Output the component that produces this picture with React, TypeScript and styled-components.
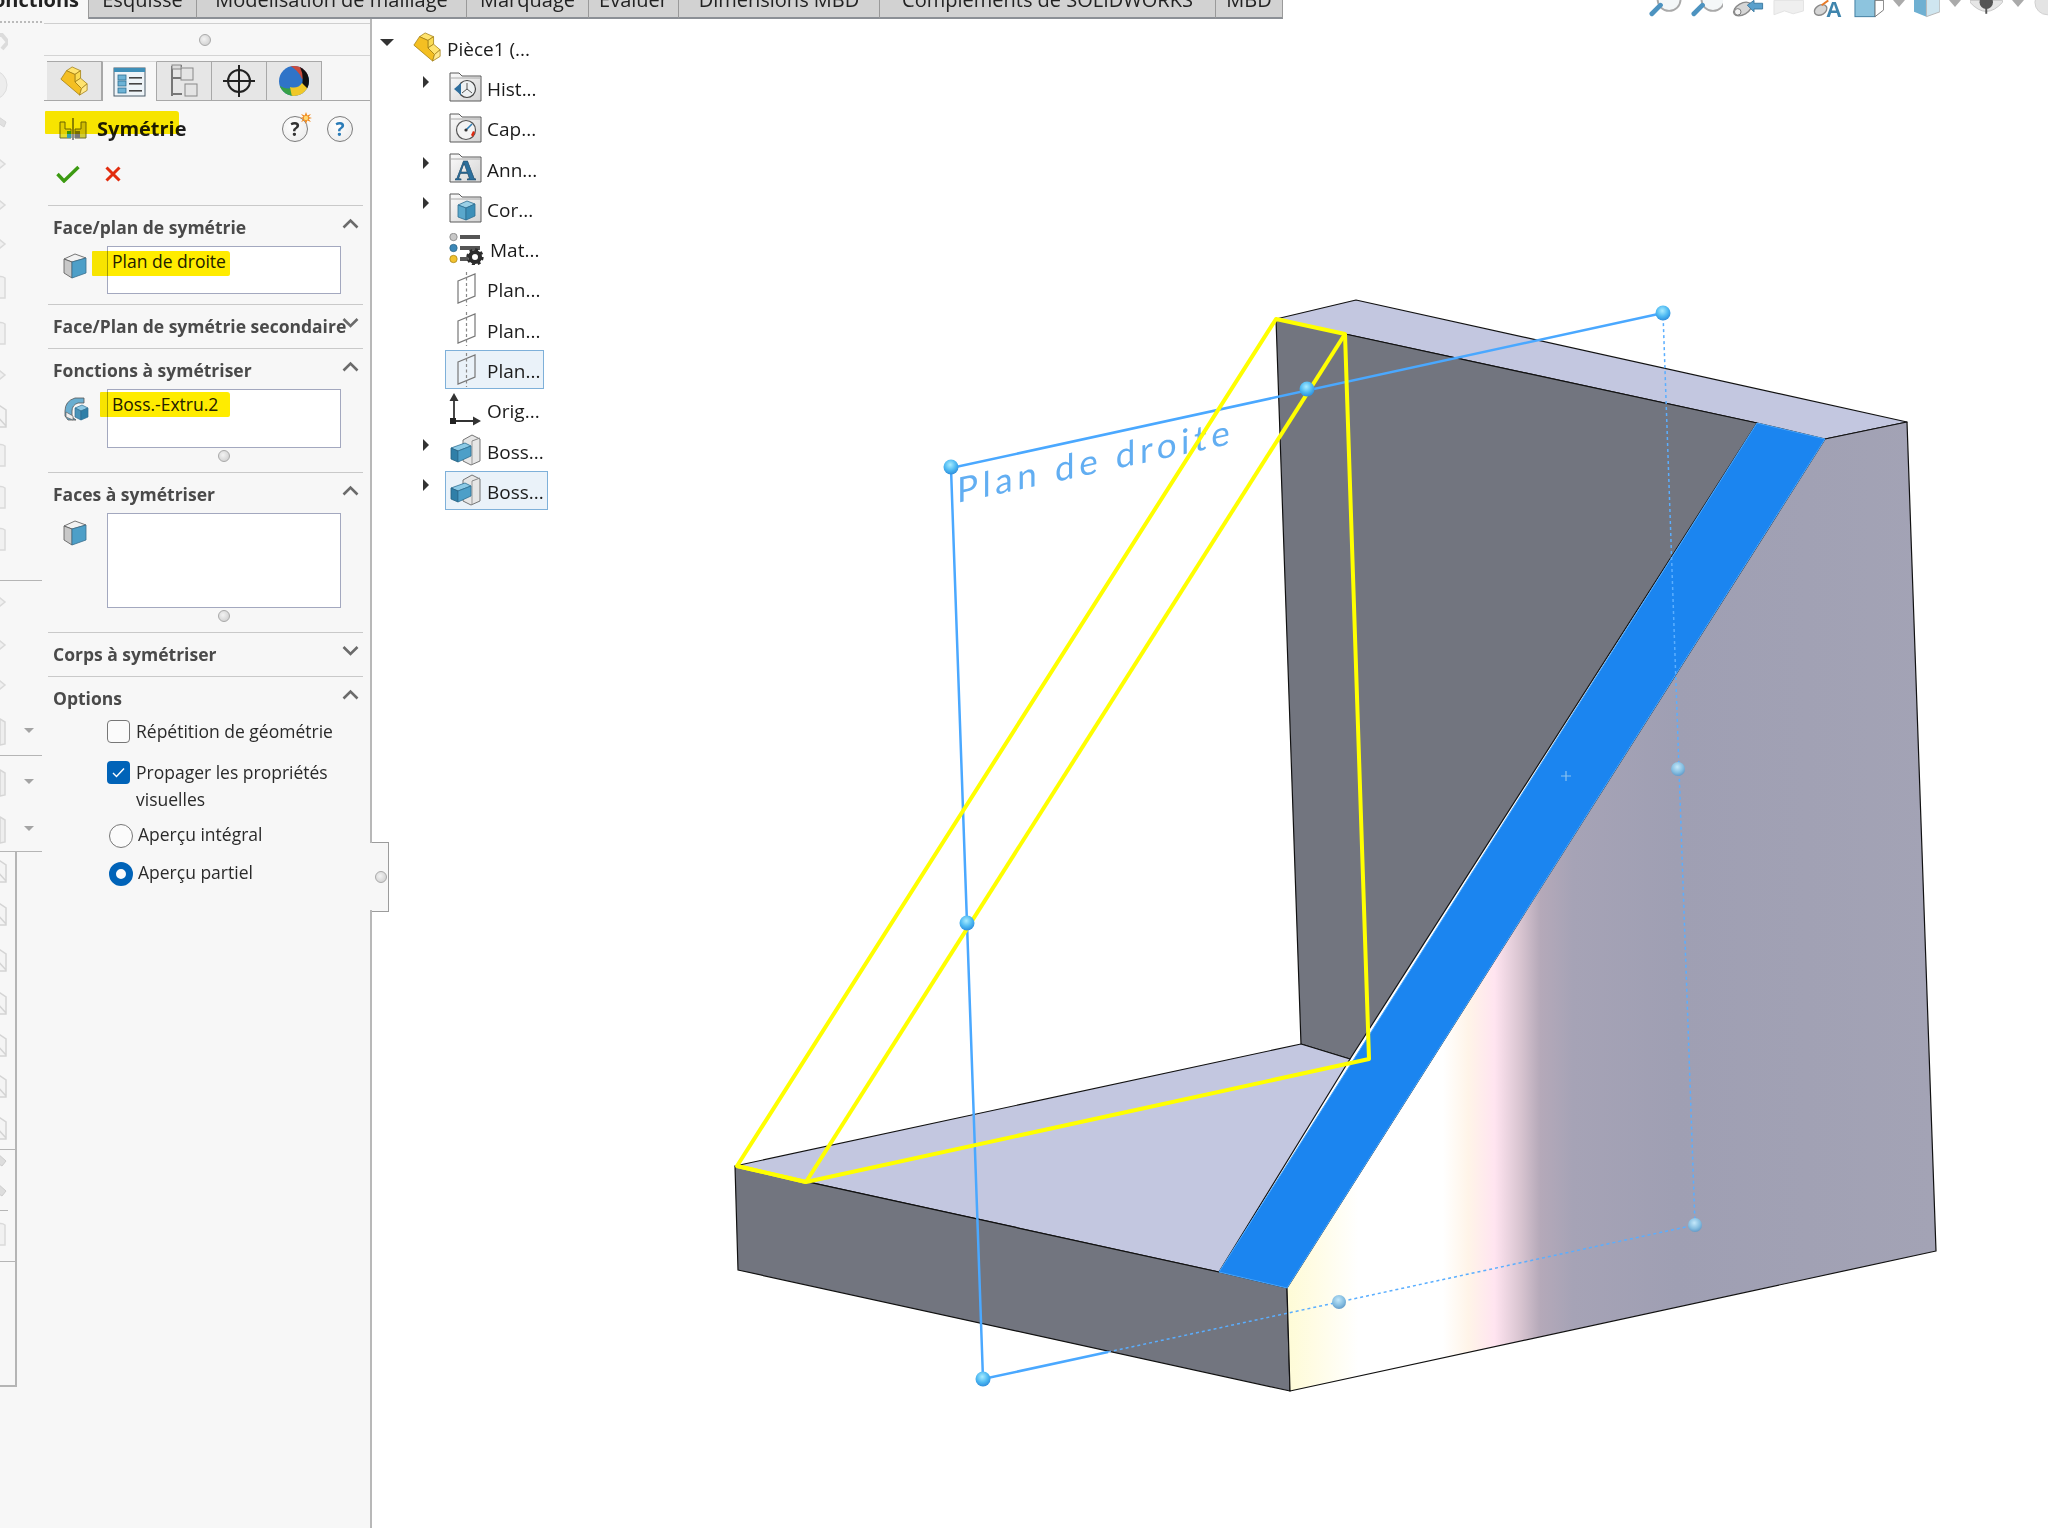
import React from "react";
import styled, { createGlobalStyle } from "styled-components";

const GlobalStyle = createGlobalStyle`
  html, body {
    margin: 0;
    padding: 0;
    background: #fff;
    font-family: "Open Sans", "Liberation Sans", sans-serif;
    color: #222;
  }
`;

const PAGE_TABS = [
  { label: "Fonctions", w: 89, active: true },
  { label: "Esquisse", w: 108 },
  { label: "Modélisation de maillage", w: 270 },
  { label: "Marquage", w: 122 },
  { label: "Évaluer", w: 90 },
  { label: "Dimensions MBD", w: 201 },
  { label: "Compléments de SOLIDWORKS", w: 336 },
  { label: "MBD", w: 67 },
];

type RailItem = { kind: "arrow" | "ball" | "bar" | "diamond" | "box" | "page" | "pencil" | "caret"; h: number };

const RAIL_GROUPS: { w: number; h: number; items: RailItem[] }[] = [
  {
    w: 42,
    h: 555,
    items: [
      { kind: "arrow", h: 38 },
      { kind: "ball", h: 44 },
      { kind: "bar", h: 36 },
      { kind: "diamond", h: 44 },
      { kind: "diamond", h: 38 },
      { kind: "diamond", h: 40 },
      { kind: "box", h: 46 },
      { kind: "box", h: 46 },
      { kind: "diamond", h: 38 },
      { kind: "page", h: 40 },
      { kind: "box", h: 42 },
      { kind: "box", h: 42 },
      { kind: "box", h: 41 },
    ],
  },
  {
    w: 42,
    h: 175,
    items: [
      { kind: "diamond", h: 46 },
      { kind: "diamond", h: 40 },
      { kind: "diamond", h: 40 },
      { kind: "caret", h: 47 },
    ],
  },
  {
    w: 42,
    h: 96,
    items: [
      { kind: "caret", h: 51 },
      { kind: "caret", h: 43 },
    ],
  },
];

const PAGE_RAIL: RailItem[] = [
  { kind: "page", h: 38 },
  { kind: "page", h: 48 },
  { kind: "page", h: 44 },
  { kind: "page", h: 42 },
  { kind: "page", h: 41 },
  { kind: "page", h: 42 },
  { kind: "page", h: 42 },
];

const Page = styled.div`
  width: 2048px;
  height: 1528px;
  display: flex;
  flex-direction: column;
  overflow: hidden;
  background: #fff;
`;

const TopBar = styled.div`
  height: 19px;
  display: flex;
  justify-content: space-between;
  flex: none;
`;

const TabStrip = styled.div`
  display: flex;
  height: 19px;
  overflow: hidden;
`;

const PageTab = styled.div<{ $w: number; $active?: boolean }>`
  width: ${(p) => p.$w}px;
  box-sizing: border-box;
  height: 19px;
  display: flex;
  justify-content: ${(p) => (p.$active ? "flex-end" : "center")};
  align-items: flex-end;
  padding-bottom: ${(p) => (p.$active ? 7 : 5)}px;
  padding-right: ${(p) => (p.$active ? 9 : 0)}px;
  background: ${(p) => (p.$active ? "#f7f7f7" : "#d2d2d2")};
  border-right: 1px solid #9a9a9a;
  border-bottom: ${(p) => (p.$active ? "none" : "2px solid #8c9096")};
  font-size: 20px;
  font-weight: ${(p) => (p.$active ? 700 : 400)};
  line-height: 24px;
  white-space: nowrap;
  color: #222;
`;

const ViewTools = styled.div`
  display: flex;
  height: 18px;
  overflow: hidden;
  align-items: flex-end;
  width: 399px;
  gap: 9px;
`;

const Body = styled.div`
  flex: 1;
  display: flex;
  min-height: 0;
`;

const Sidebar = styled.aside`
  position: relative;
  width: 372px;
  flex: none;
  box-sizing: border-box;
  display: flex;
  background: #f7f7f7;
  border-right: 2px solid #b8b8b8;
`;

const Rail = styled.div`
  width: 44px;
  flex: none;
  overflow: hidden;
`;

const RailDots = styled.div`
  height: 3px;
  margin: 2px 2px 0 0;
  border-top: 2px dotted #bbb;
`;

const RailGroup = styled.div<{ $h: number; $w: number }>`
  width: ${(p) => p.$w}px;
  height: ${(p) => p.$h}px;
  box-sizing: border-box;
  border-bottom: 1px solid #b5b5b5;
  overflow: hidden;
`;

const RailPageGroup = styled.div`
  width: 17px;
  height: 535px;
  box-sizing: border-box;
  border-right: 2px solid #b5b5b5;
  border-bottom: 2px solid #b5b5b5;
  overflow: hidden;
`;

const RailRule = styled.div<{ $w: number }>`
  width: ${(p) => p.$w}px;
  height: 1px;
  background: #b5b5b5;
`;

const RailSlot = styled.div<{ $h: number }>`
  height: ${(p) => p.$h}px;
  display: flex;
  align-items: center;
  justify-content: space-between;
`;

const RailCaret = styled.span`
  width: 0;
  height: 0;
  margin: 0 8px 0 auto;
  border-left: 5px solid transparent;
  border-right: 5px solid transparent;
  border-top: 5px solid #a4a4a4;
`;

const Panel = styled.div`
  flex: 1;
  min-width: 0;
`;

const PanelTopLine = styled.div`
  height: 4px;
  border-bottom: 1px solid #cfcfcf;
`;

const DotRow = styled.div`
  height: 31px;
  display: flex;
  align-items: center;
  justify-content: center;
  padding-right: 4px;
  border-bottom: 1px solid #d4d4d4;
`;

const Grip = styled.span`
  display: block;
  width: 10px;
  height: 10px;
  border-radius: 50%;
  background: radial-gradient(circle at 40% 40%, #f3f3f3, #c9c9c9);
  border: 1px solid #a9a9a9;
`;

const PanelTabs = styled.div`
  display: flex;
  margin-top: 5px;
  padding-left: 3px;
  height: 40px;
  box-sizing: border-box;
  border-bottom: 1px solid #a8a8a8;
`;

const PanelTab = styled.div<{ $active?: boolean }>`
  width: 55px;
  height: ${(p) => (p.$active ? 40 : 39)}px;
  box-sizing: border-box;
  display: flex;
  align-items: center;
  justify-content: center;
  background: ${(p) => (p.$active ? "#f7f7f7" : "#e6e6e6")};
  border: 1px solid #a8a8a8;
  border-bottom: none;
  border-left: ${(p) => (p.$active ? "1px solid #a8a8a8" : "none")};
  border-top: 1px solid ${(p) => (p.$active ? "#d6d6d6" : "#a8a8a8")};
`;

const TitleRow = styled.div`
  position: relative;
  height: 50px;
  box-sizing: border-box;
  padding: 6px 17px 0 15px;
  display: flex;
  align-items: center;
`;

const TitleText = styled.h1`
  margin: 0 0 0 10px;
  font-size: 20px;
  line-height: 26px;
  font-weight: 700;
  color: #1d1d1d;
`;

const HelpGroup = styled.div`
  margin-left: auto;
  display: flex;
  gap: 19px;
`;

const HelpButton = styled.span<{ $blue?: boolean }>`
  position: relative;
  width: 26px;
  height: 26px;
  box-sizing: border-box;
  border-radius: 50%;
  border: 1px solid #7c7c7c;
  background: radial-gradient(circle at 40% 35%, #fff, #e8e8e8);
  display: flex;
  align-items: center;
  justify-content: center;
  font-size: 19px;
  font-weight: 700;
  line-height: 24px;
  color: ${(p) => (p.$blue ? "#2b7cb8" : "#333")};
`;

const Spark = styled.svg`
  position: absolute;
  top: -5px;
  right: -5px;
`;

const Highlight = styled.span<{ $l: number; $t: number; $w: number; $h: number }>`
  position: absolute;
  left: ${(p) => p.$l}px;
  top: ${(p) => p.$t}px;
  width: ${(p) => p.$w}px;
  height: ${(p) => p.$h}px;
  background: #ffec00;
  mix-blend-mode: multiply;
  border-radius: 1px 3px 2px 1px;
  pointer-events: none;
`;

const ActionRow = styled.div`
  height: 54px;
  box-sizing: border-box;
  padding: 0 0 8px 12px;
  display: flex;
  align-items: center;
  gap: 25px;
`;

const Section = styled.section<{ $pad?: number }>`
  margin: 0 7px 0 4px;
  border-top: 1px solid #c9c9c9;
  padding-bottom: ${(p) => p.$pad ?? 0}px;
`;

const SectionHead = styled.div`
  position: relative;
  height: 40px;
  box-sizing: border-box;
  padding: 2px 0 0 5px;
  display: flex;
  align-items: center;
`;

const SectionTitle = styled.h2`
  margin: 0;
  font-size: 17.5px;
  font-weight: 700;
  color: #4a4a4a;
  white-space: nowrap;
  line-height: 24px;
`;

const Chevron = styled.svg`
  position: absolute;
  right: 4px;
  top: 12px;
`;

const FieldRow = styled.div`
  position: relative;
  display: flex;
  align-items: flex-start;
`;

const FieldIcon = styled.span`
  width: 59px;
  flex: none;
  padding: 7px 0 0 15px;
  box-sizing: border-box;
  display: flex;
`;

const FieldBox = styled.div<{ $h: number }>`
  width: 234px;
  height: ${(p) => p.$h}px;
  box-sizing: border-box;
  border: 1px solid #a3a8bf;
  background: #fff;
  padding: 2px 4px;
  font-size: 17.5px;
  line-height: 24px;
  color: #222;
`;

const BoxGrip = styled.div<{ $h: number }>`
  height: ${(p) => p.$h}px;
  width: 234px;
  margin-left: 59px;
  display: flex;
  justify-content: center;
  padding-top: 2px;
  box-sizing: border-box;
`;

const OptionList = styled.div`
  padding-left: 59px;
  display: flex;
  flex-direction: column;
`;

const CheckRow = styled.label<{ $top: number }>`
  display: flex;
  margin-top: ${(p) => p.$top}px;
  gap: 6px;
`;

const CheckBox = styled.span<{ $on?: boolean }>`
  width: 23px;
  height: 23px;
  flex: none;
  box-sizing: border-box;
  border-radius: 4px;
  border: ${(p) => (p.$on ? "none" : "1.5px solid #777")};
  background: ${(p) => (p.$on ? "#0063b8" : "#fbfbfb")};
  display: flex;
  align-items: center;
  justify-content: center;
`;

const OptionLabel = styled.span`
  font-size: 17.5px;
  line-height: 27px;
  margin-top: -2px;
  color: #2a2a2a;
`;

const RadioRow = styled.label<{ $top: number }>`
  display: flex;
  align-items: center;
  margin: ${(p) => p.$top}px 0 0 2px;
  gap: 5px;
`;

const RadioDot = styled.span<{ $on?: boolean }>`
  width: 24px;
  height: 24px;
  flex: none;
  box-sizing: border-box;
  border-radius: 50%;
  border: ${(p) => (p.$on ? "7px solid #0063b8" : "1.5px solid #777")};
  background: #fbfbfb;
`;

const SashTab = styled.div`
  position: absolute;
  right: -19px;
  top: 823px;
  width: 17px;
  height: 70px;
  box-sizing: border-box;
  background: #f7f7f7;
  border: 1.5px solid #9c9c9c;
  border-left: none;
  display: flex;
  align-items: center;
  justify-content: flex-end;
  padding-right: 1px;
`;

const SashCover = styled.div`
  position: absolute;
  right: -2px;
  top: 824px;
  width: 2px;
  height: 67px;
  background: #f7f7f7;
`;

const Tree = styled.nav`
  width: 188px;
  flex: none;
  padding-top: 8px;
  box-sizing: border-box;
`;

const TreeRow = styled.div<{ $root?: boolean }>`
  height: 40.3px;
  display: flex;
  align-items: center;
  padding-left: ${(p) => (p.$root ? 8 : 47)}px;
`;

const TreeCaretSlot = styled.span<{ $root?: boolean }>`
  width: ${(p) => (p.$root ? 28 : 26)}px;
  flex: none;
  display: flex;
  padding-left: ${(p) => (p.$root ? 0 : 4)}px;
  box-sizing: border-box;
`;

const CaretRight = styled.span`
  width: 0;
  height: 0;
  margin-top: -10px;
  border-top: 6px solid transparent;
  border-bottom: 6px solid transparent;
  border-left: 6px solid #333;
`;

const CaretDown = styled.span`
  width: 0;
  height: 0;
  margin-top: -8px;
  border-left: 7px solid transparent;
  border-right: 7px solid transparent;
  border-top: 7px solid #333;
`;

const TreeItem = styled.div<{ $selected?: boolean }>`
  height: 39px;
  box-sizing: border-box;
  display: flex;
  align-items: center;
  gap: 5px;
  padding: 0 3px;
  border: 1px solid ${(p) => (p.$selected ? "#7eb0d9" : "transparent")};
  background: ${(p) => (p.$selected ? "#eaf2f9" : "transparent")};
`;

const TreeLabel = styled.span`
  font-size: 19px;
  line-height: 26px;
  color: #1b1b1b;
  padding-top: 3px;
  white-space: nowrap;
`;

const Viewport = styled.svg`
  flex: none;
  width: 1488px;
  height: 1509px;
  display: block;
`;

const ToolCaret = styled.span<{ $pale?: boolean }>`
  width: 0;
  height: 0;
  margin-bottom: 11px;
  border-left: 6px solid transparent;
  border-right: 6px solid transparent;
  border-top: 7px solid #aaa;
`;

/* little drawings */

const PartIcon = ({ size = 30 }: { size?: number }) => (
  <svg width={size} height={size} viewBox="0 0 30 32">
    <g stroke="#a07c12" strokeWidth="0.8" strokeLinejoin="round">
      <polygon points="7,5 13,1 22,5 16,9" fill="#ffe36e" />
      <polygon points="16,9 22,5 22,13 16,17" fill="#fadb52" />
      <polygon points="16,17 22,13 29,19 23,24" fill="#ffe36e" />
      <polygon points="1,14 7,5 16,9 16,17 23,24 21,31" fill="#f4bf22" />
      <polygon points="23,24 29,19 29,26 21,31" fill="#ffe98e" />
    </g>
  </svg>
);

const ListIcon = () => (
  <svg width="34" height="32" viewBox="0 0 34 32">
    <rect x="1" y="2" width="31" height="28" fill="#eef4f8" stroke="#4b5c6a" />
    <rect x="1" y="2" width="31" height="4" fill="#3f8fb8" />
    {[9, 15, 22].map((y) => (
      <g key={y}>
        <rect x="5" y={y} width="8" height="5" fill="#6db3d6" stroke="#2f6f92" strokeWidth="0.8" />
        <rect x="16" y={y + 2} width="13" height="1.6" fill="#444" />
      </g>
    ))}
  </svg>
);

const ConfigIcon = () => (
  <svg width="30" height="34" viewBox="0 0 30 34">
    <path d="M3 2h10M3 2v30M3 14h10M3 30h10" fill="none" stroke="#777" strokeWidth="2" />
    <rect x="12" y="4" width="12" height="12" fill="#e4e4e4" stroke="#888" />
    <rect x="16" y="20" width="12" height="12" fill="#e4e4e4" stroke="#888" />
    <rect x="3" y="1" width="9" height="4" fill="#ddd" stroke="#888" />
  </svg>
);

const TargetIcon = () => (
  <svg width="34" height="34" viewBox="0 0 34 34">
    <circle cx="17" cy="17" r="11" fill="none" stroke="#222" strokeWidth="2" />
    <path d="M17 1v32M1 17h32" stroke="#222" strokeWidth="2" />
  </svg>
);

const SphereIcon = () => (
  <svg width="32" height="32" viewBox="0 0 32 32">
    <defs>
      <clipPath id="sphere-clip">
        <circle cx="16" cy="16" r="15" />
      </clipPath>
    </defs>
    <g clipPath="url(#sphere-clip)">
      <rect width="32" height="32" fill="#2f74c8" />
      <path d="M10 0h22v10l-8 4q-4-10-14-14z" fill="#c94a3c" />
      <path d="M22 2h10v24l-8-6q2-10-2-18z" fill="#111" />
      <path d="M0 20q10 6 14 2l2 10H0z" fill="#36a046" />
      <path d="M12 22q8 2 12-4l8 8-8 6H14z" fill="#f0c828" />
    </g>
  </svg>
);

const SymmetryIcon = () => (
  <svg width="28" height="22" viewBox="0 0 28 22">
    <path d="M1 4h5v7h6v9H1z" fill="#e3df30" stroke="#6a6a30" />
    <path d="M27 4h-5v7h-6v9h11z" fill="#cfcb38" stroke="#6a6a30" />
    <rect x="8" y="13" width="4" height="7" fill="#37a0b0" />
    <rect x="16" y="13" width="5" height="7" fill="#777" />
    <path d="M14 0v22" stroke="#222" />
  </svg>
);

const CubeIcon = () => (
  <svg width="24" height="26" viewBox="0 0 24 26">
    <polygon points="1,6 12,1 23,5 9,9" fill="#f2f2f2" stroke="#555" strokeWidth="0.8" />
    <polygon points="1,6 9,9 9,25 1,20" fill="#c8c8c8" stroke="#555" strokeWidth="0.8" />
    <polygon points="9,9 23,5 23,20 9,25" fill="#4d9fc8" stroke="#3a6f8d" strokeWidth="0.8" />
  </svg>
);

const FeatureCubeIcon = () => (
  <svg width="26" height="26" viewBox="0 0 26 26">
    <path d="M2 15q0-10 10-13h9v5h-6q-6 2-6 8v6l4 3H5l-3-4z" fill="#6aaed0" stroke="#555" strokeWidth="0.8" />
    <path d="M3 16l7 4v4l-7-3z" fill="#eee" stroke="#555" strokeWidth="0.6" />
    <polygon points="12,12 19,9 25,12 18,15" fill="#8cc8e4" stroke="#2f6f92" strokeWidth="0.7" />
    <polygon points="12,12 18,15 18,24 12,21" fill="#4a93b8" stroke="#2f6f92" strokeWidth="0.7" />
    <polygon points="18,15 25,12 25,21 18,24" fill="#2f7fa8" stroke="#2f6f92" strokeWidth="0.7" />
  </svg>
);

const FolderIcon = ({ children }: { children: React.ReactNode }) => (
  <svg width="33" height="30" viewBox="0 0 33 30">
    <defs>
      <linearGradient id="folder-fill" x1="0" y1="0" x2="1" y2="1">
        <stop offset="0" stopColor="#fbfbfb" />
        <stop offset="1" stopColor="#d4d4d4" />
      </linearGradient>
    </defs>
    <path d="M1 29V1h9l3 3h19v25z" fill="url(#folder-fill)" stroke="#5a5a5a" strokeWidth="1" />
    <path d="M1 6h31" stroke="#aaa" />
    {children}
  </svg>
);

const HistoryGlyph = () => (
  <g>
    <circle cx="18" cy="17" r="8.5" fill="#eef1f2" stroke="#444" strokeWidth="1.2" />
    <path d="M18 17v-6M18 17l5 4M18 17l-5 4" stroke="#555" strokeWidth="1" />
    <path d="M5 17l7-6v12z" fill="#2f6f9e" />
  </g>
);

const GaugeGlyph = () => (
  <g>
    <circle cx="17" cy="17" r="9.5" fill="#f4f4f4" stroke="#555" strokeWidth="1.2" />
    <path d="M17 17l6-6" stroke="#2f7fb8" strokeWidth="1.6" />
    <circle cx="17" cy="17" r="1.6" fill="#333" />
    <path d="M24 18l2 1-2 5-2-2z" fill="#e02a10" />
  </g>
);

const AnnotationGlyph = () => (
  <text x="16.5" y="27" textAnchor="middle" fontFamily="Liberation Serif, serif" fontWeight="700" fontSize="29" fill="#2c6f9c" stroke="#16405e" strokeWidth="0.5">
    A
  </text>
);

const BodyGlyph = () => (
  <g strokeWidth="0.8" stroke="#2f6f92">
    <polygon points="9,12 18,8 26,11 17,15" fill="#9bd0e6" />
    <polygon points="9,12 17,15 17,27 9,24" fill="#5aa8cc" />
    <polygon points="17,15 26,11 26,23 17,27" fill="#3c8fb8" />
  </g>
);

const MaterialIcon = () => (
  <svg width="36" height="32" viewBox="0 0 36 32">
    <circle cx="4.5" cy="4" r="3.7" fill="#c8c8c8" stroke="#777" strokeWidth="0.7" />
    <rect x="11" y="2" width="20" height="4" fill="#555" />
    <circle cx="4.5" cy="15" r="3.7" fill="#3c88b8" stroke="#2a6080" strokeWidth="0.7" />
    <rect x="11" y="13" width="20" height="4" fill="#555" />
    <circle cx="4.5" cy="26" r="3.7" fill="#f2c22e" stroke="#a07c12" strokeWidth="0.7" />
    <rect x="11" y="24" width="8" height="4" fill="#555" />
    <circle cx="26" cy="24" r="5" fill="none" stroke="#2c2c2c" strokeWidth="4" />
    <circle cx="26" cy="24" r="7.4" fill="none" stroke="#2c2c2c" strokeWidth="2.5" strokeDasharray="3 2.8" />
  </svg>
);

const PlaneIcon = () => (
  <svg width="33" height="34" viewBox="0 0 33 34">
    <polygon points="9,9 26,2 26,24 9,31" fill="none" stroke="#777" strokeWidth="1.2" />
    <path d="M17.5 0v34" stroke="#888" strokeWidth="1.2" strokeDasharray="3 2.5" />
  </svg>
);

const OriginIcon = () => (
  <svg width="33" height="34" viewBox="0 0 33 34">
    <path d="M5 28V6M5 28h22" stroke="#333" strokeWidth="1.8" />
    <path d="M5 0l4.5 8h-9zM32 28l-8 4.5v-9z" fill="#333" />
    <rect x="1" y="25" width="6" height="6" fill="#222" />
  </svg>
);

const BossIcon = () => (
  <svg width="33" height="32" viewBox="0 0 33 32">
    <polygon points="14,6 23,1 31,5 31,27 22,31 14,27" fill="#e6e6e6" stroke="#666" strokeWidth="0.9" />
    <path d="M23 7v23" stroke="#999" />
    <path d="M23 7l8-3" stroke="#888" />
    <polygon points="2,14 16,9 22,12 9,17" fill="#8ccae6" stroke="#2f6f92" strokeWidth="0.8" />
    <polygon points="2,14 9,17 9,28 2,25" fill="#2f7fa8" stroke="#245f80" strokeWidth="0.8" />
    <polygon points="9,17 22,12 22,22 9,28" fill="#4d9fc8" stroke="#2f6f92" strokeWidth="0.8" />
  </svg>
);

const SectionChevron = ({ open }: { open: boolean }) => (
  <Chevron width="17" height="11" viewBox="0 0 17 11">
    <path d={open ? "M1.5 9.5L8.5 2.5L15.5 9.5" : "M1.5 2L8.5 9L15.5 2"} fill="none" stroke="#6b6b6b" strokeWidth="2.6" />
  </Chevron>
);

const RailGlyph = ({ kind }: { kind: RailItem["kind"] }) => {
  if (kind === "caret") {
    return (
      <>
        <svg width="6" height="30" viewBox="0 0 6 30">
          <path d="M0 3l5 3v22l-5 1z" fill="#eee" stroke="#d6d6d6" strokeWidth="1.5" />
        </svg>
        <RailCaret />
      </>
    );
  }
  const shapes: Record<string, React.ReactNode> = {
    arrow: <path d="M-8 5l10 0 6 7-6 7" fill="none" stroke="#dcdcdc" strokeWidth="4" />,
    ball: <circle cx="-8" cy="14" r="15" fill="#ededed" stroke="#ddd" />,
    bar: <path d="M-4 4l10 7-2 5-9-6z" fill="#e0e0e0" stroke="#d6d6d6" />,
    diamond: <path d="M-6 4l11 9-11 9z" fill="#f0f0f0" stroke="#dadada" strokeWidth="1.5" />,
    box: <path d="M-4 4q5-3 9 0v20h-9z" fill="#f1f1f1" stroke="#dadada" strokeWidth="1.5" />,
    page: <path d="M-4 2l10 7v17h-10z M-4 14l10 11" fill="#f4f4f4" stroke="#d4d4d4" strokeWidth="1.5" />,
    pencil: <path d="M-3 3l9 8-4 5-6-4z" fill="#ddd" stroke="#ccc" />,
  };
  return (
    <svg width="8" height="30" viewBox="0 0 8 30">
      {shapes[kind]}
    </svg>
  );
};

const MagnifierTool = ({ glassX }: { glassX: number }) => (
  <svg width="34" height="18" viewBox="0 0 34 18">
    <circle cx={glassX} cy="-1" r="12" fill="#f4f7f8" stroke="#a9a9a9" strokeWidth="2" />
    <path d="M3 14l9-9" stroke="#4d93c0" strokeWidth="5" strokeLinecap="round" />
  </svg>
);

const ViewToolIcons = () => (
  <>
    <MagnifierTool glassX={21} />
    <MagnifierTool glassX={23} />
    <svg width="33" height="18" viewBox="0 0 33 18">
      <ellipse cx="11" cy="9" rx="10" ry="6" transform="rotate(-30 11 9)" fill="#d6d6d6" stroke="#8a8a8a" strokeWidth="1.5" />
      <circle cx="6" cy="12" r="3.4" fill="#f4f4f4" stroke="#777" />
      <path d="M16 5l7-5v3h9v6h-9v3z" fill="#5aa0cc" stroke="#3d7ba2" />
    </svg>
    <svg width="33" height="18" viewBox="0 0 33 18">
      <path d="M1 0v15l11-4 9 3 11-3V0z" fill="#efefef" stroke="#e2e2e2" />
    </svg>
    <svg width="33" height="18" viewBox="0 0 33 18">
      <ellipse cx="8" cy="10" rx="7" ry="5" transform="rotate(-30 8 10)" fill="#d6d6d6" stroke="#8a8a8a" strokeWidth="1.5" />
      <path d="M9 5l7-5" stroke="#e87a28" strokeWidth="2" />
      <text x="22" y="17" textAnchor="middle" fontFamily="Liberation Sans, sans-serif" fontWeight="700" fontSize="23" fill="#3f85ad">
        A
      </text>
    </svg>
    <svg width="32" height="18" viewBox="0 0 32 18">
      <rect x="1" y="-4" width="21" height="21" fill="#8dc4de" stroke="#3f7da0" />
      <path d="M22 0h9v10l-9 7z" fill="#fff" stroke="#777" />
    </svg>
    <ToolCaret />
    <svg width="27" height="18" viewBox="0 0 27 18">
      <polygon points="0,-2 13,-2 13,17 0,12" fill="#6fb0d2" />
      <polygon points="13,-2 27,-2 27,12 13,17" fill="#cfe6f0" stroke="#b5b5b5" />
    </svg>
    <ToolCaret />
    <svg width="34" height="18" viewBox="0 0 34 18">
      <path d="M0 2q17 19 34 0V0H0z" fill="#e6e6e6" stroke="#c4c4c4" />
      <circle cx="17" cy="2" r="7" fill="#555" />
      <path d="M17 0v14" stroke="#555" strokeWidth="2" />
    </svg>
    <ToolCaret />
    <svg width="16" height="18" viewBox="0 0 16 18">
      <circle cx="15" cy="2" r="13" fill="#e4e4e4" stroke="#cfcfcf" />
    </svg>
  </>
);

const Handle = ({ x, y, pale }: { x: number; y: number; pale?: boolean }) => (
  <circle cx={x} cy={y} r={pale ? 7 : 7.5} fill={pale ? "url(#handle-pale)" : "url(#handle)"} />
);

const SolidScene = () => (
  <Viewport viewBox="560 19 1488 1509">
    <defs>
      <radialGradient id="handle" cx="0.45" cy="0.35" r="0.7">
        <stop offset="0" stopColor="#a8ecff" />
        <stop offset="0.55" stopColor="#4db9f2" />
        <stop offset="1" stopColor="#2a86d8" />
      </radialGradient>
      <radialGradient id="handle-pale" cx="0.45" cy="0.35" r="0.7">
        <stop offset="0" stopColor="#c4e8fa" />
        <stop offset="0.6" stopColor="#84bde0" />
        <stop offset="1" stopColor="#5c94c4" />
      </radialGradient>
      <linearGradient id="face-sheen" gradientUnits="userSpaceOnUse" x1="1287" y1="0" x2="1936" y2="0">
        <stop offset="0" stopColor="#fefbd6" />
        <stop offset="0.04" stopColor="#fffce4" />
        <stop offset="0.11" stopColor="#ffffff" />
        <stop offset="0.24" stopColor="#ffffff" />
        <stop offset="0.28" stopColor="#fff4e8" />
        <stop offset="0.32" stopColor="#ffe4f0" />
        <stop offset="0.36" stopColor="#d8c4d0" />
        <stop offset="0.39" stopColor="#b5a9b9" />
        <stop offset="0.44" stopColor="#a6a3b6" />
        <stop offset="0.6" stopColor="#9f9fb3" />
        <stop offset="1" stopColor="#a3a3b5" />
      </linearGradient>
    </defs>

    <g stroke="#111" strokeWidth="1.2" strokeLinejoin="round">
      <polygon points="1356,300 1907,422 1825,439 1757,423 1345,334 1276,319" fill="#c3c7e0" />
      <polygon points="1276,319 1757,423 1350,1059 1301,1044" fill="#72757f" />
      <polygon points="735,1166 1301,1044 1350,1059 1219,1272" fill="#c3c7e0" />
      <polygon points="735,1166 1219,1272 1287,1288 1290,1391 738,1270" fill="#72757f" />
      <polygon points="1825,439 1907,422 1936,1251 1290,1391 1287,1288" fill="url(#face-sheen)" />
    </g>
    <polygon points="1757,423 1825,439 1287,1288 1219,1272" fill="#1b85f0" stroke="#4aa8ff" strokeWidth="1" />

    <path d="M1108 1352L1695 1225L1663 313" fill="none" stroke="#5aaeff" strokeWidth="1.5" strokeDasharray="3 3" />
    <path d="M1108 1352L983 1379L951 468L1663 313" fill="none" stroke="#4aa8ff" strokeWidth="2.5" />

    <text
      transform="matrix(1 -0.215 0 1 957 503)"
      fontFamily="Lato, sans-serif"
      fontSize="35"
      letterSpacing="4.6"
      fill="#62aef2"
    >
      Plan de droite
    </text>

    <g fill="none" stroke="#ffff00" strokeWidth="4" strokeLinejoin="round">
      <polygon points="737,1166 1276,319 1345,334 1369,1059 806,1182" />
      <path d="M806 1182L1345 334" />
      <path d="M737 1166L806 1182" />
    </g>

    <path d="M1566 771v10M1561 776h10" stroke="#8cc4f0" strokeWidth="1.2" />

    <Handle x={951} y={467} />
    <Handle x={1663} y={313} />
    <Handle x={983} y={1379} />
    <Handle x={1695} y={1225} pale />
    <Handle x={1307} y={389} />
    <Handle x={967} y={923} />
    <Handle x={1678} y={769} pale />
    <Handle x={1339} y={1302} pale />
  </Viewport>
);

const App: React.FC = () => {
  return (
    <Page>
      <GlobalStyle />
      <TopBar>
        <TabStrip>
          {PAGE_TABS.map((tab) => (
            <PageTab key={tab.label} $w={tab.w} $active={tab.active}>
              {tab.label}
            </PageTab>
          ))}
        </TabStrip>
        <ViewTools>
          <ViewToolIcons />
        </ViewTools>
      </TopBar>

      <Body>
        <Sidebar>
          <Rail>
            <RailDots />
            {RAIL_GROUPS.map((group, i) => (
              <RailGroup key={i} $w={group.w} $h={group.h}>
                {group.items.map((item, j) => (
                  <RailSlot key={j} $h={item.h}>
                    <RailGlyph kind={item.kind} />
                  </RailSlot>
                ))}
              </RailGroup>
            ))}
            <RailPageGroup>
              {PAGE_RAIL.map((item, j) => (
                <RailSlot key={j} $h={item.h}>
                  <RailGlyph kind={item.kind} />
                </RailSlot>
              ))}
              <RailRule $w={15} />
              <RailSlot $h={30}>
                <RailGlyph kind="pencil" />
              </RailSlot>
              <RailSlot $h={30}>
                <RailGlyph kind="pencil" />
              </RailSlot>
              <RailRule $w={8} />
              <RailSlot $h={50}>
                <RailGlyph kind="box" />
              </RailSlot>
              <RailRule $w={15} />
            </RailPageGroup>
          </Rail>

          <Panel>
            <PanelTopLine />
            <DotRow>
              <Grip />
            </DotRow>
            <PanelTabs>
              <PanelTab>
                <PartIcon />
              </PanelTab>
              <PanelTab $active>
                <ListIcon />
              </PanelTab>
              <PanelTab>
                <ConfigIcon />
              </PanelTab>
              <PanelTab>
                <TargetIcon />
              </PanelTab>
              <PanelTab>
                <SphereIcon />
              </PanelTab>
            </PanelTabs>

            <TitleRow>
              <SymmetryIcon />
              <TitleText>Symétrie</TitleText>
              <Highlight $l={1} $t={10} $w={134} $h={23} />
              <HelpGroup>
                <HelpButton>
                  ?
                  <Spark width="12" height="12" viewBox="0 0 12 12">
                    <path d="M6 0l1.3 3.4L11 2 8.6 5 12 6 8.6 7 11 10 7.3 8.6 6 12 4.7 8.6 1 10l2.4-3L0 6l3.4-1L1 2l3.7 1.4z" fill="#f08a1e" />
                    <circle cx="6" cy="6" r="2.2" fill="#ffd873" />
                  </Spark>
                </HelpButton>
                <HelpButton $blue>?</HelpButton>
              </HelpGroup>
            </TitleRow>

            <ActionRow>
              <svg width="24" height="18" viewBox="0 0 24 18">
                <path d="M1.5 9L8 16L22.5 2" fill="none" stroke="#3c9a12" strokeWidth="3.4" />
              </svg>
              <svg width="16" height="16" viewBox="0 0 16 16">
                <path d="M1.5 1.5L14.5 14.5M14.5 1.5L1.5 14.5" stroke="#e22c0e" strokeWidth="3" />
              </svg>
            </ActionRow>

            <Section $pad={10}>
              <SectionHead>
                <SectionTitle>Face/plan de symétrie</SectionTitle>
                <SectionChevron open />
              </SectionHead>
              <FieldRow>
                <FieldIcon>
                  <CubeIcon />
                </FieldIcon>
                <FieldBox $h={48}>Plan de droite</FieldBox>
                <Highlight $l={44} $t={5} $w={138} $h={25} />
              </FieldRow>
            </Section>

            <Section $pad={3}>
              <SectionHead>
                <SectionTitle>Face/Plan de symétrie secondaire</SectionTitle>
                <SectionChevron open={false} />
              </SectionHead>
            </Section>

            <Section>
              <SectionHead>
                <SectionTitle>Fonctions à symétriser</SectionTitle>
                <SectionChevron open />
              </SectionHead>
              <FieldRow>
                <FieldIcon>
                  <FeatureCubeIcon />
                </FieldIcon>
                <FieldBox $h={59}>Boss.-Extru.2</FieldBox>
                <Highlight $l={52} $t={3} $w={130} $h={25} />
              </FieldRow>
              <BoxGrip $h={24}>
                <Grip />
              </BoxGrip>
            </Section>

            <Section>
              <SectionHead>
                <SectionTitle>Faces à symétriser</SectionTitle>
                <SectionChevron open />
              </SectionHead>
              <FieldRow>
                <FieldIcon>
                  <CubeIcon />
                </FieldIcon>
                <FieldBox $h={95} />
              </FieldRow>
              <BoxGrip $h={24}>
                <Grip />
              </BoxGrip>
            </Section>

            <Section $pad={3}>
              <SectionHead>
                <SectionTitle>Corps à symétriser</SectionTitle>
                <SectionChevron open={false} />
              </SectionHead>
            </Section>

            <Section>
              <SectionHead>
                <SectionTitle>Options</SectionTitle>
                <SectionChevron open />
              </SectionHead>
              <OptionList>
                <CheckRow $top={3}>
                  <CheckBox />
                  <OptionLabel>Répétition de géométrie</OptionLabel>
                </CheckRow>
                <CheckRow $top={16}>
                  <CheckBox $on>
                    <svg width="13" height="11" viewBox="0 0 13 11">
                      <path d="M1 6l3.5 3.5L12 1.5" fill="none" stroke="#fff" strokeWidth="1.4" />
                    </svg>
                  </CheckBox>
                  <OptionLabel>Propager les propriétés visuelles</OptionLabel>
                </CheckRow>
                <RadioRow $top={10}>
                  <RadioDot />
                  <OptionLabel>Aperçu intégral</OptionLabel>
                </RadioRow>
                <RadioRow $top={13}>
                  <RadioDot $on />
                  <OptionLabel>Aperçu partiel</OptionLabel>
                </RadioRow>
              </OptionList>
            </Section>
          </Panel>
          <SashCover />
          <SashTab>
            <Grip />
          </SashTab>
        </Sidebar>

        <Tree>
          <TreeRow $root>
            <TreeCaretSlot $root>
              <CaretDown />
            </TreeCaretSlot>
            <TreeItem>
              <PartIcon />
              <TreeLabel>Pièce1 (...</TreeLabel>
            </TreeItem>
          </TreeRow>
          <TreeRow>
            <TreeCaretSlot>
              <CaretRight />
            </TreeCaretSlot>
            <TreeItem>
              <FolderIcon>
                <HistoryGlyph />
              </FolderIcon>
              <TreeLabel>Hist...</TreeLabel>
            </TreeItem>
          </TreeRow>
          <TreeRow>
            <TreeCaretSlot />
            <TreeItem>
              <FolderIcon>
                <GaugeGlyph />
              </FolderIcon>
              <TreeLabel>Cap...</TreeLabel>
            </TreeItem>
          </TreeRow>
          <TreeRow>
            <TreeCaretSlot>
              <CaretRight />
            </TreeCaretSlot>
            <TreeItem>
              <FolderIcon>
                <AnnotationGlyph />
              </FolderIcon>
              <TreeLabel>Ann...</TreeLabel>
            </TreeItem>
          </TreeRow>
          <TreeRow>
            <TreeCaretSlot>
              <CaretRight />
            </TreeCaretSlot>
            <TreeItem>
              <FolderIcon>
                <BodyGlyph />
              </FolderIcon>
              <TreeLabel>Cor...</TreeLabel>
            </TreeItem>
          </TreeRow>
          <TreeRow>
            <TreeCaretSlot />
            <TreeItem>
              <MaterialIcon />
              <TreeLabel>Mat...</TreeLabel>
            </TreeItem>
          </TreeRow>
          <TreeRow>
            <TreeCaretSlot />
            <TreeItem>
              <PlaneIcon />
              <TreeLabel>Plan...</TreeLabel>
            </TreeItem>
          </TreeRow>
          <TreeRow>
            <TreeCaretSlot />
            <TreeItem>
              <PlaneIcon />
              <TreeLabel>Plan...</TreeLabel>
            </TreeItem>
          </TreeRow>
          <TreeRow>
            <TreeCaretSlot />
            <TreeItem $selected>
              <PlaneIcon />
              <TreeLabel>Plan...</TreeLabel>
            </TreeItem>
          </TreeRow>
          <TreeRow>
            <TreeCaretSlot />
            <TreeItem>
              <OriginIcon />
              <TreeLabel>Orig...</TreeLabel>
            </TreeItem>
          </TreeRow>
          <TreeRow>
            <TreeCaretSlot>
              <CaretRight />
            </TreeCaretSlot>
            <TreeItem>
              <BossIcon />
              <TreeLabel>Boss...</TreeLabel>
            </TreeItem>
          </TreeRow>
          <TreeRow>
            <TreeCaretSlot>
              <CaretRight />
            </TreeCaretSlot>
            <TreeItem $selected>
              <BossIcon />
              <TreeLabel>Boss...</TreeLabel>
            </TreeItem>
          </TreeRow>
        </Tree>

        <SolidScene />
      </Body>
    </Page>
  );
};

export default App;
